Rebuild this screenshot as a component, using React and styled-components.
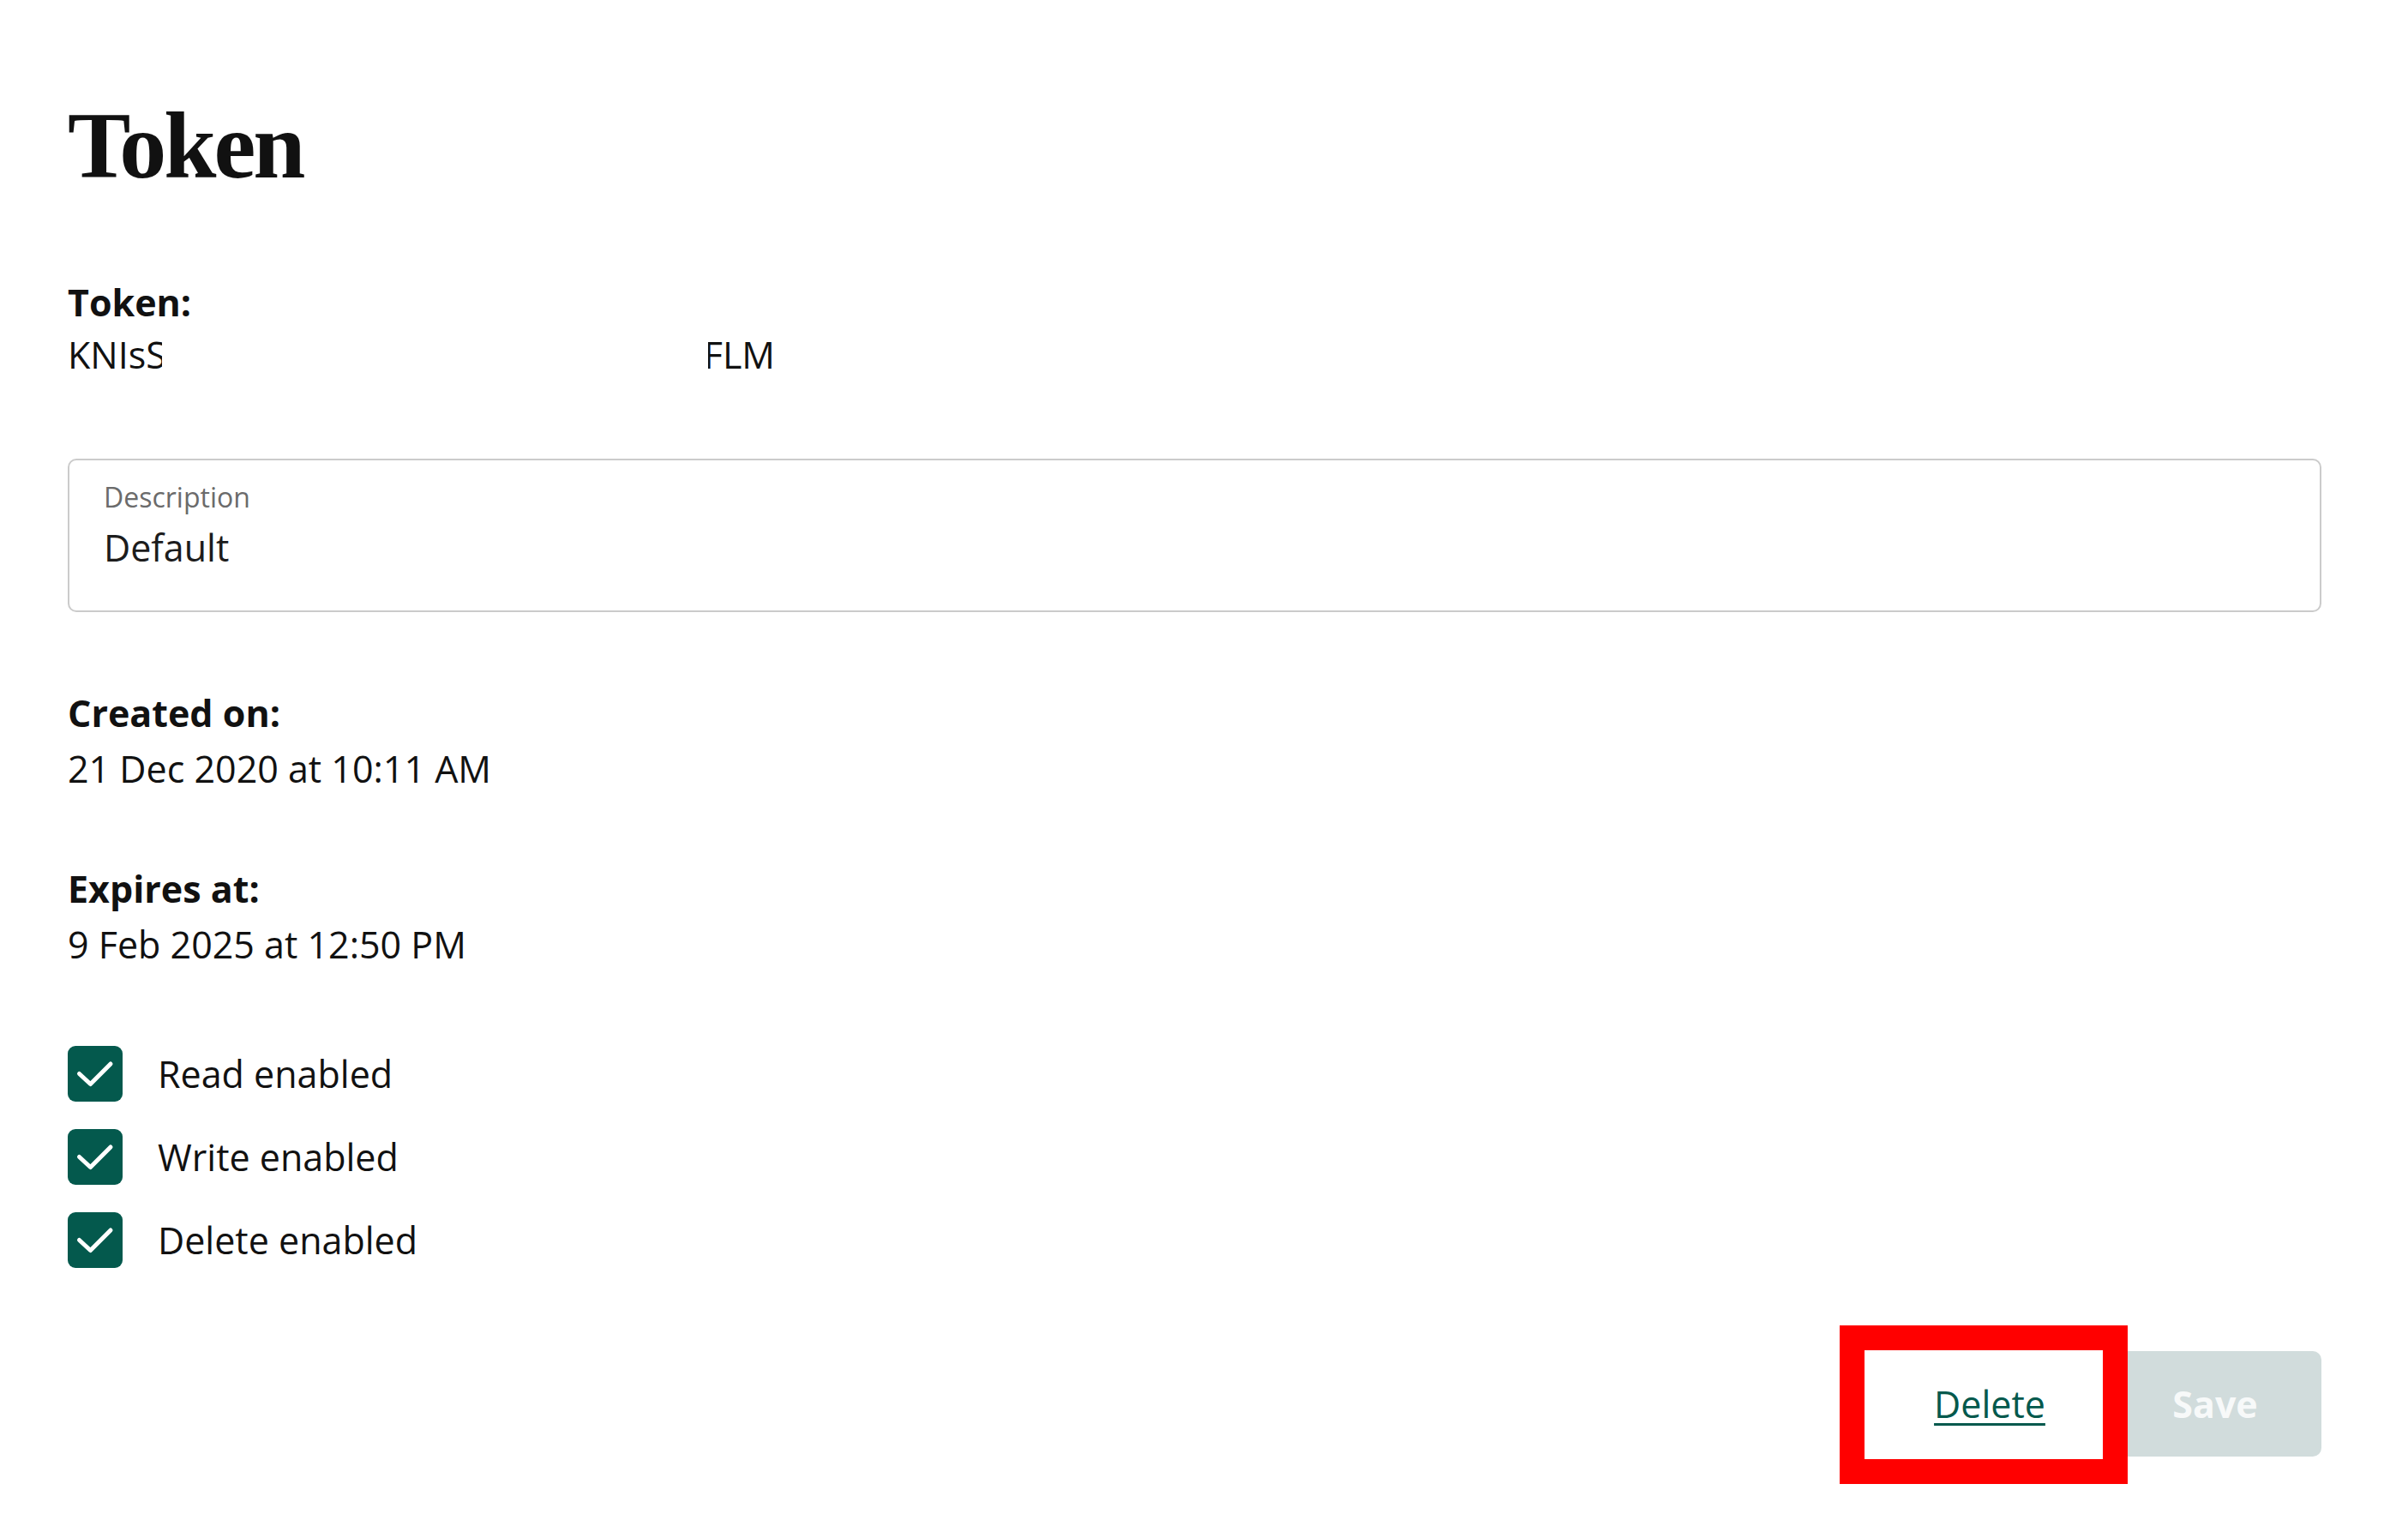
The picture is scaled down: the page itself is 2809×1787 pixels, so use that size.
import React from 'react'
import styled, { createGlobalStyle } from 'styled-components'

const GlobalStyle = createGlobalStyle`
	body {
		margin: 0;
		background: #ffffff;
	}
	* {
		box-sizing: border-box;
	}
`;

const Page = styled.main`
	min-height: 100vh;
	padding: 115px 101px 86px 79px;
	font-family: "Open Sans", "Noto Sans", sans-serif;
	font-size: 43px;
	color: #111111;
`;

const Title = styled.h1`
	margin: 0;
	font-family: "Liberation Serif", serif;
	font-weight: 700;
	font-size: 110px;
	line-height: 110px;
	letter-spacing: -3px;
	color: #111111;
`;

const Field = styled.section`
	margin-top: ${props => props.$gap}px;
	line-height: ${props => props.$lineHeight || 65}px;
`;

const Label = styled.div`
	font-weight: 700;
`;

const Value = styled.div`
	display: flex;
	font-weight: 400;
	white-space: nowrap;
`;

// the middle of the token is blanked out in the screenshot
const TokenPart = styled.span`
	display: flex;
	justify-content: ${props => (props.$end ? 'flex-end' : 'flex-start')};
	width: ${props => props.$width}px;
	overflow: hidden;
`;

const Redacted = styled.span`
	width: ${props => props.$width}px;
`;

const DescriptionBox = styled.div`
	margin-top: 91px;
	border: 2px solid #cbcbcb;
	border-radius: 10px;
	padding: 20px 40px 41px;
`;

const DescriptionLabel = styled.div`
	font-size: 32px;
	line-height: 46px;
	color: #6b6b6b;
`;

const DescriptionValue = styled.div`
	margin-top: 3px;
	line-height: 65px;
	color: #1c1c1c;
`;

const CheckList = styled.div`
	display: flex;
	flex-direction: column;
	gap: 32px;
	margin-top: 86px;
`;

const CheckRow = styled.label`
	display: flex;
	align-items: center;
	gap: 41px;
	line-height: 65px;
`;

const CheckBox = styled.span`
	display: flex;
	align-items: center;
	justify-content: center;
	width: 64px;
	height: 65px;
	border-radius: 9px;
	background-color: #04594d;
`;

const ButtonRow = styled.div`
	display: flex;
	justify-content: flex-end;
	gap: 15px;
	margin-top: 97px;
`;

const ButtonSlot = styled.div`
	position: relative;
	display: flex;
`;

const Button = styled.button`
	width: 248px;
	height: 123px;
	border: none;
	border-radius: 10px;
	font-family: "Open Sans", "Noto Sans", sans-serif;
	font-size: 43px;
	cursor: pointer;
`;

const DeleteButton = styled(Button)`
	background: transparent;
	color: #04594d;
	font-weight: 400;
	text-decoration: underline;
	text-decoration-thickness: 3px;
	text-underline-offset: 6px;
`;

const SaveButton = styled(Button)`
	background-color: #d1dcdc;
	color: #f7f9f9;
	font-weight: 700;
	cursor: default;
`;

// red highlight drawn over the screenshot
const Highlight = styled.span`
	position: absolute;
	top: -30px;
	left: -51px;
	right: -37px;
	bottom: -32px;
	border: 29px solid #ff0000;
	pointer-events: none;
`;

const Check = () => (
	<svg width="64" height="64" viewBox="0 0 64 64" fill="none">
		<path d="M13.5 31.5 26.5 43.5 50 20" stroke="#ffffff" strokeWidth="5" strokeLinecap="round" strokeLinejoin="round" />
	</svg>
)

const permissions = ['Read enabled', 'Write enabled', 'Delete enabled']

export default function App() {
	return (
		<>
			<GlobalStyle />
			<Page>
				<Title>Token</Title>
				<Field $gap={97} $lineHeight={61}>
					<Label>Token:</Label>
					<Value>
						<TokenPart $width={110}>KNIsS</TokenPart>
						<Redacted $width={637} />
						<TokenPart $width={78} $end>FLM</TokenPart>
					</Value>
				</Field>
				<DescriptionBox>
					<DescriptionLabel>Description</DescriptionLabel>
					<DescriptionValue>Default</DescriptionValue>
				</DescriptionBox>
				<Field $gap={85}>
					<Label>Created on:</Label>
					<Value>21 Dec 2020 at 10:11 AM</Value>
				</Field>
				<Field $gap={75}>
					<Label>Expires at:</Label>
					<Value>9 Feb 2025 at 12:50 PM</Value>
				</Field>
				<CheckList>
					{permissions.map(name => (
						<CheckRow key={name}>
							<CheckBox><Check /></CheckBox>
							{name}
						</CheckRow>
					))}
				</CheckList>
				<ButtonRow>
					<ButtonSlot>
						<DeleteButton>Delete</DeleteButton>
						<Highlight />
					</ButtonSlot>
					<SaveButton disabled>Save</SaveButton>
				</ButtonRow>
			</Page>
		</>
	)
}
